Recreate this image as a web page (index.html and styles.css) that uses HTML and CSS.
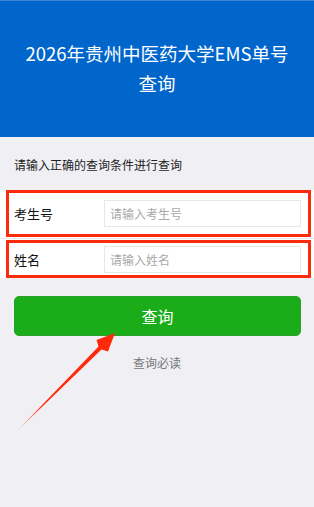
FILE: index.html
```html
<!DOCTYPE html>
<html lang="zh-CN">
<head>
<meta charset="utf-8">
<title>2026年贵州中医药大学EMS单号查询</title>
<link rel="stylesheet" href="styles.css">
</head>
<body>
<div class="page">
  <header class="header">
    <h1 class="title">2026年贵州中医药大学EMS单号查询</h1>
  </header>
  <p class="tip">请输入正确的查询条件进行查询</p>
  <div class="form">
    <div class="row row-first">
      <div class="mark mark-first">
        <label class="label">考生号</label>
        <div class="input"><span class="placeholder">请输入考生号</span></div>
      </div>
    </div>
    <div class="row">
      <div class="mark mark-second">
        <label class="label">姓名</label>
        <div class="input"><span class="placeholder">请输入姓名</span></div>
      </div>
    </div>
  </div>
  <div class="btn">查询</div>
  <p class="notice">查询必读</p>
  <svg class="arrow" width="314" height="507" viewBox="0 0 314 507">
    <defs>
      <linearGradient id="ag" x1="17" y1="431" x2="115" y2="333" gradientUnits="userSpaceOnUse">
        <stop offset="0" stop-color="#ff6a50" stop-opacity="0.4"/>
        <stop offset="0.25" stop-color="#ff2a0a"/>
        <stop offset="1" stop-color="#ff2a0a"/>
      </linearGradient>
    </defs>
    <polygon points="17,431 98.5,346.5 96.5,340 115,333 108,351.5 101.5,349.5" fill="url(#ag)"/>
  </svg>
</div>
</body>
</html>
```
FILE: styles.css
```css
* { box-sizing: border-box; }
html, body { margin: 0; padding: 0; }
body {
  background: #efeff4;
  font-family: "Noto Sans CJK SC", "Noto Sans", sans-serif;
}
.page {
  position: relative;
  width: 314px;
  min-height: 507px;
  background: #efeff4;
}
.header {
  background: #0066cc;
  border-top: 1px solid #3d86d6;
  height: 137px;
  padding: 37px 22px 0;
}
.title {
  margin: 0;
  color: #fff;
  font-size: 18.5px;
  font-weight: 400;
  line-height: 30px;
  text-align: center;
}
.tip {
  margin: 0;
  padding: 19px 14px 17px;
  font-size: 12px;
  line-height: 17px;
  color: #222;
}
.form {
  background: #fff;
}
.row-first {
  border-bottom: 1px solid #e6e6ea;
}
.mark {
  display: flex;
  align-items: center;
  border: 3px solid #fe2a0c;
  margin: 0 3px 0 6px;
  padding: 0 7px 0 5px;
}
.mark-first {
  height: 47px;
  margin-bottom: 1px;
}
.mark-second {
  height: 38px;
  margin-top: 1px;
  margin-bottom: 1px;
}
.label {
  width: 90px;
  flex: none;
  font-size: 13px;
  color: #111;
}
.input {
  flex: 1;
  height: 27px;
  border: 1px solid #e8e8e8;
  display: flex;
  align-items: center;
  padding-left: 5px;
}
.placeholder {
  font-size: 12px;
  color: #a9a9a9;
}
.btn {
  margin: 18px 13px 0 14px;
  height: 40px;
  border-radius: 5px;
  background: #1aad19;
  border: 1px solid #2aa02a;
  color: #fff;
  font-size: 16px;
  display: flex;
  align-items: center;
  justify-content: center;
}
.notice {
  margin: 18px 0 0;
  text-align: center;
  font-size: 12px;
  line-height: 17px;
  color: #777;
}
.arrow {
  position: absolute;
  left: 0;
  top: 0;
  pointer-events: none;
}
```
